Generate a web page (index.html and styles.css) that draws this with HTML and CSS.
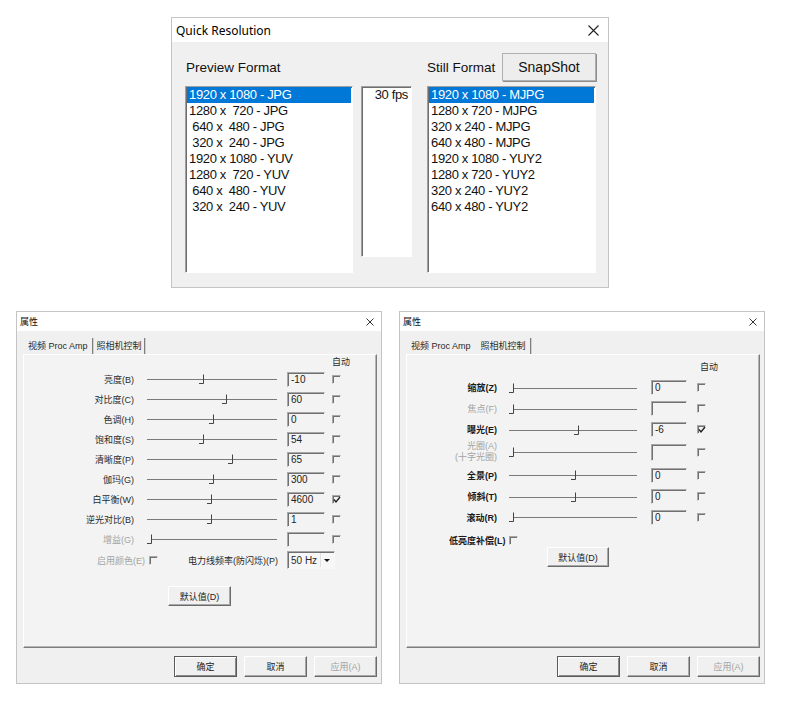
FILE: index.html
```html
<!DOCTYPE html>
<html>
<head>
<meta charset="utf-8">
<title>Camera dialogs</title>
<link rel="stylesheet" href="styles.css">
</head>
<body>

<div class="win qr">
  <div class="titlebar">
    <span class="ttl">Quick Resolution</span>
    <svg class="close-l" width="11" height="11" viewBox="0 0 11 11"><path d="M0.5 0.5L10.5 10.5M10.5 0.5L0.5 10.5" stroke="#222" stroke-width="1.1" fill="none"/></svg>
  </div>
  <div class="qr-body">
    <div class="qr-head">
      <div class="prev-label">Preview Format</div>
      <div class="still">
        <span>Still Format</span>
        <div class="snap">SnapShot</div>
      </div>
    </div>
    <div class="qr-lists">
      <div class="sunken lst lst-prev">
        <div class="item sel">1920 x 1080 - JPG</div>
        <div class="item">1280 x  720 - JPG</div>
        <div class="item"> 640 x  480 - JPG</div>
        <div class="item"> 320 x  240 - JPG</div>
        <div class="item">1920 x 1080 - YUV</div>
        <div class="item">1280 x  720 - YUV</div>
        <div class="item"> 640 x  480 - YUV</div>
        <div class="item"> 320 x  240 - YUV</div>
      </div>
      <div class="sunken lst lst-fps">
        <div class="item fps">30 fps</div>
      </div>
      <div class="sunken lst lst-still">
        <div class="item sel">1920 x 1080 - MJPG</div>
        <div class="item">1280 x 720 - MJPG</div>
        <div class="item">320 x 240 - MJPG</div>
        <div class="item">640 x 480 - MJPG</div>
        <div class="item">1920 x 1080 - YUY2</div>
        <div class="item">1280 x 720 - YUY2</div>
        <div class="item">320 x 240 - YUY2</div>
        <div class="item">640 x 480 - YUY2</div>
      </div>
    </div>
  </div>
</div>

<!-- Left property dialog -->
<div class="win prop prop-l">
  <div class="titlebar">
    <span class="ttl">属性</span>
    <svg class="close-s" width="8" height="8" viewBox="0 0 8 8"><path d="M0.5 0.5L7.5 7.5M7.5 0.5L0.5 7.5" stroke="#333" stroke-width="1" fill="none"/></svg>
  </div>
  <div class="prop-body">
    <div class="tabs">
      <span class="tab t1 sep">视频 Proc Amp</span>
      <span class="tab t2 sep">照相机控制</span>
    </div>
    <div class="panel">
      <div class="auto-h">自动</div>
      <div class="row">
        <span class="lbl">亮度(B)</span>
        <svg class="slider" width="130" height="14"><path d="M0 7.5H130" stroke="#7a7a7a"/><path d="M52 11.5H56.5V2.5" stroke="#444" fill="none"/></svg>
        <span class="tb sunk">-10</span><span class="cb sunk"></span>
      </div>
      <div class="row">
        <span class="lbl">对比度(C)</span>
        <svg class="slider" width="130" height="14"><path d="M0 7.5H130" stroke="#7a7a7a"/><path d="M75 11.5H79.5V2.5" stroke="#444" fill="none"/></svg>
        <span class="tb sunk">60</span><span class="cb sunk"></span>
      </div>
      <div class="row">
        <span class="lbl">色调(H)</span>
        <svg class="slider" width="130" height="14"><path d="M0 7.5H130" stroke="#7a7a7a"/><path d="M62 11.5H66.5V2.5" stroke="#444" fill="none"/></svg>
        <span class="tb sunk">0</span><span class="cb sunk"></span>
      </div>
      <div class="row">
        <span class="lbl">饱和度(S)</span>
        <svg class="slider" width="130" height="14"><path d="M0 7.5H130" stroke="#7a7a7a"/><path d="M52 11.5H56.5V2.5" stroke="#444" fill="none"/></svg>
        <span class="tb sunk">54</span><span class="cb sunk"></span>
      </div>
      <div class="row">
        <span class="lbl">清晰度(P)</span>
        <svg class="slider" width="130" height="14"><path d="M0 7.5H130" stroke="#7a7a7a"/><path d="M81 11.5H85.5V2.5" stroke="#444" fill="none"/></svg>
        <span class="tb sunk">65</span><span class="cb sunk"></span>
      </div>
      <div class="row">
        <span class="lbl">伽玛(G)</span>
        <svg class="slider" width="130" height="14"><path d="M0 7.5H130" stroke="#7a7a7a"/><path d="M62 11.5H66.5V2.5" stroke="#444" fill="none"/></svg>
        <span class="tb sunk">300</span><span class="cb sunk"></span>
      </div>
      <div class="row">
        <span class="lbl">白平衡(W)</span>
        <svg class="slider" width="130" height="14"><path d="M0 7.5H130" stroke="#7a7a7a"/><path d="M60 11.5H64.5V2.5" stroke="#444" fill="none"/></svg>
        <span class="tb sunk">4600</span><span class="cb sunk"><svg width="8" height="8" viewBox="0 0 8 8"><path d="M1 3.5L3 6L7 1" stroke="#222" stroke-width="1.4" fill="none"/></svg></span>
      </div>
      <div class="row">
        <span class="lbl">逆光对比(B)</span>
        <svg class="slider" width="130" height="14"><path d="M0 7.5H130" stroke="#7a7a7a"/><path d="M60 11.5H64.5V2.5" stroke="#444" fill="none"/></svg>
        <span class="tb sunk">1</span><span class="cb sunk"></span>
      </div>
      <div class="row">
        <span class="lbl dis">增益(G)</span>
        <svg class="slider" width="130" height="14"><path d="M4 7.5H130" stroke="#7a7a7a"/><path d="M0 11.5H4.5V2.5" stroke="#444" fill="none"/></svg>
        <span class="tb sunk"></span><span class="cb sunk"></span>
      </div>
      <div class="row2">
        <div class="grp1"><span class="dis">启用颜色(E)</span><span class="cb sunk"></span></div>
        <span class="pl-lbl">电力线频率(防闪烁)(P)</span>
        <div class="combo sunk"><span class="cval">50 Hz</span><span class="cbtn"><i class="tri"></i></span></div>
      </div>
      <div class="pbtn defbtn">默认值(D)</div>
    </div>
    <div class="btnrow">
      <div class="pbtn def">确定</div>
      <div class="pbtn">取消</div>
      <div class="pbtn dis">应用(A)</div>
    </div>
  </div>
</div>

<!-- Right property dialog -->
<div class="win prop prop-r">
  <div class="titlebar">
    <span class="ttl">属性</span>
    <svg class="close-s" width="8" height="8" viewBox="0 0 8 8"><path d="M0.5 0.5L7.5 7.5M7.5 0.5L0.5 7.5" stroke="#333" stroke-width="1" fill="none"/></svg>
  </div>
  <div class="prop-body">
    <div class="tabs">
      <span class="tab t1">视频 Proc Amp</span>
      <span class="tab t2 sep">照相机控制</span>
    </div>
    <div class="panel">
      <div class="auto-h">自动</div>
      <div class="row r21">
        <span class="lbl">缩放(Z)</span>
        <svg class="slider" width="128" height="14"><path d="M4 7.5H128" stroke="#7a7a7a"/><path d="M0 11.5H4.5V2.5" stroke="#444" fill="none"/></svg>
        <span class="tb sunk">0</span><span class="cb sunk"></span>
      </div>
      <div class="row r21">
        <span class="lbl dis">焦点(F)</span>
        <svg class="slider" width="128" height="14"><path d="M4 7.5H128" stroke="#7a7a7a"/><path d="M0 11.5H4.5V2.5" stroke="#444" fill="none"/></svg>
        <span class="tb sunk"></span><span class="cb sunk"></span>
      </div>
      <div class="row r21">
        <span class="lbl">曝光(E)</span>
        <svg class="slider" width="128" height="14"><path d="M0 7.5H128" stroke="#7a7a7a"/><path d="M65 11.5H69.5V2.5" stroke="#444" fill="none"/></svg>
        <span class="tb sunk">-6</span><span class="cb sunk"><svg width="8" height="8" viewBox="0 0 8 8"><path d="M1 3.5L3 6L7 1" stroke="#222" stroke-width="1.4" fill="none"/></svg></span>
      </div>
      <div class="row r24">
        <span class="lbl dis two">光圈(A)<br>(十字光圈)</span>
        <svg class="slider" width="128" height="14"><path d="M4 7.5H128" stroke="#7a7a7a"/><path d="M0 11.5H4.5V2.5" stroke="#444" fill="none"/></svg>
        <span class="tb sunk tall"></span><span class="cb sunk"></span>
      </div>
      <div class="row r22">
        <span class="lbl">全景(P)</span>
        <svg class="slider" width="128" height="14"><path d="M0 7.5H128" stroke="#7a7a7a"/><path d="M62 11.5H66.5V2.5" stroke="#444" fill="none"/></svg>
        <span class="tb sunk">0</span><span class="cb sunk"></span>
      </div>
      <div class="row r21">
        <span class="lbl">倾斜(T)</span>
        <svg class="slider" width="128" height="14"><path d="M0 7.5H128" stroke="#7a7a7a"/><path d="M62 11.5H66.5V2.5" stroke="#444" fill="none"/></svg>
        <span class="tb sunk">0</span><span class="cb sunk"></span>
      </div>
      <div class="row">
        <span class="lbl">滚动(R)</span>
        <svg class="slider" width="128" height="14"><path d="M4 7.5H128" stroke="#7a7a7a"/><path d="M0 11.5H4.5V2.5" stroke="#444" fill="none"/></svg>
        <span class="tb sunk">0</span><span class="cb sunk"></span>
      </div>
      <div class="row3">
        <span class="lbl3">低亮度补偿(L)</span><span class="cb sunk"></span>
      </div>
      <div class="pbtn defbtn">默认值(D)</div>
    </div>
    <div class="btnrow">
      <div class="pbtn def">确定</div>
      <div class="pbtn">取消</div>
      <div class="pbtn dis">应用(A)</div>
    </div>
  </div>
</div>

</body>
</html>
```

FILE: styles.css
```css
* { box-sizing: border-box; }

html, body { margin: 0; }

body {
  width: 788px;
  height: 707px;
  position: relative;
  overflow: hidden;
  background: #ffffff;
  font-family: "Liberation Sans", Arial, sans-serif;
  color: #111;
}

/* generic window (free canvas placement) */
.win {
  position: absolute;
  display: flex;
  flex-direction: column;
  background: #f0f0f0;
  border: 1px solid #c4c4c4;
}

.titlebar {
  display: flex;
  align-items: center;
  justify-content: space-between;
  background: #ffffff;
  flex: none;
}

/* sunken 3D edge */
.sunken {
  border: 1px solid;
  border-color: #a0a0a0 #ffffff #ffffff #a0a0a0;
  box-shadow: inset 1px 1px 0 #6d6d6d;
}

.sunk {
  border: 1px solid;
  border-color: #a8a8a8 transparent transparent #a8a8a8;
  box-shadow: inset 1px 1px 0 #707070;
}

/* ---------- Quick Resolution ---------- */
.qr {
  left: 171px;
  top: 17px;
  width: 438px;
  height: 271px;
}

.qr .titlebar {
  height: 24px;
  padding: 0 9px 0 4px;
  font-family: "Noto Sans", "Liberation Sans", sans-serif;
  font-size: 12px;
  color: #000;
}

.qr-body {
  padding: 11px 0 0 13px;
}

.qr-head {
  display: flex;
  align-items: center;
  height: 28px;
  margin-bottom: 5px;
  font-size: 13.5px;
  color: #111;
}

.prev-label {
  width: 242px;
  padding-left: 1px;
}

.still {
  width: 169px;
  display: flex;
  align-items: center;
  justify-content: space-between;
}

.snap {
  width: 94px;
  height: 28px;
  display: flex;
  align-items: center;
  justify-content: center;
  font-size: 14px;
  background: #ededed;
  border: 1px solid #b0b0b0;
  box-shadow: 1px 1px 0 #8c8c8c;
}

.qr-lists {
  display: flex;
  align-items: flex-start;
}

.lst {
  background: #ffffff;
  padding: 0 1px;
  font-size: 13px;
  letter-spacing: -0.35px;
  color: #111;
}

.lst-prev { width: 168px; height: 187px; }
.lst-fps { width: 51px; height: 171px; margin-left: 8px; }
.lst-still { width: 169px; height: 187px; margin-left: 15px; }

.item {
  height: 16px;
  line-height: 16px;
  padding-left: 2px;
  white-space: pre;
}

.item.sel {
  background: #0078d7;
  color: #ffffff;
}

.item.fps {
  text-align: right;
  padding-right: 2px;
}

/* ---------- Property dialogs ---------- */
.prop {
  top: 311px;
  width: 366px;
  height: 373px;
  font-family: "Liberation Sans", "Noto Sans CJK SC", sans-serif;
  font-size: 9px;
  color: #2a2a2a;
}

.prop-l { left: 16px; }
.prop-r { left: 399px; }

.prop .titlebar {
  height: 19px;
  padding: 0 7px 0 3px;
  font-size: 9px;
  color: #111;
}

.prop-body {
  flex: 1;
  display: flex;
  flex-direction: column;
  padding: 0 4px 0 6px;
}

.tabs {
  display: flex;
  height: 16px;
  margin-top: 7px;
}

.tab {
  line-height: 17px;
  white-space: nowrap;
  border-right: 1px solid transparent;
}

.tab.sep {
  border-right: 1px solid #7d7d7d;
  box-shadow: 1px 0 0 #d0d0d0;
  height: 18px;
}

.tab.t1 { padding: 0 4px 0 5px; }
.tab.t2 { padding: 0 2px 0 4px; }
.prop-r .tab.t2 { padding: 0 4px 0 5px; }

.panel {
  height: 294px;
  display: flex;
  flex-direction: column;
  background: #f3f3f3;
  border: 1px solid;
  border-color: #ffffff #7d7d7d #7d7d7d #ffffff;
  box-shadow: inset -1px -1px 0 #b5b5b5;
}

.auto-h {
  height: 14px;
  line-height: 14px;
  padding-left: 308px;
}

.prop-r .auto-h {
  margin-top: 5px;
  margin-bottom: 3px;
  padding-left: 293px;
}

.row {
  display: flex;
  align-items: center;
  height: 20px;
}

.r21 { height: 21px; }
.r22 { height: 22px; }
.r24 { height: 24px; }

.lbl {
  width: 110px;
  text-align: right;
  white-space: nowrap;
}

.prop-r .lbl {
  width: 90px;
  font-weight: 700;
  color: #1a1a1a;
}

.lbl.two {
  line-height: 11px;
}

.prop .lbl.dis, .prop .dis {
  color: #a3a3a3;
  font-weight: 400;
}

.slider {
  display: block;
  margin-left: 13px;
  flex: none;
}

.prop-r .slider { margin-left: 12px; }

.tb {
  display: block;
  margin-left: 10px;
  width: 38px;
  height: 15px;
  padding: 1px 0 0 3px;
  font-size: 10px;
  line-height: 12px;
  color: #222;
  flex: none;
}

.prop-r .tb {
  margin-left: 14px;
  width: 36px;
}

.tb.tall { height: 17px; }

.cb {
  display: block;
  flex: none;
  width: 9px;
  height: 9px;
  margin-left: 7px;
  position: relative;
}

.prop-r .row .cb { margin-left: 10px; }

.cb svg {
  position: absolute;
  left: 0;
  top: 0;
}

.row2 {
  display: flex;
  align-items: center;
  height: 22px;
}

.grp1 {
  width: 134px;
  display: flex;
  align-items: center;
  justify-content: flex-end;
}

.grp1 .cb { margin-left: 4px; }

.pl-lbl {
  width: 120px;
  text-align: right;
  white-space: nowrap;
}

.combo {
  display: flex;
  align-items: center;
  margin-left: 9px;
  width: 48px;
  height: 18px;
  font-size: 10px;
  background: #f7f7f7;
}

.cval {
  flex: 1;
  padding-left: 3px;
}

.cbtn {
  width: 12px;
  height: 14px;
  margin-right: 2px;
  display: flex;
  align-items: center;
  justify-content: center;
  background: #f7f7f7;
  border-left: 1px solid #e0e0e0;
}

.tri {
  width: 0;
  height: 0;
  border-left: 3px solid transparent;
  border-right: 3px solid transparent;
  border-top: 3px solid #111;
}

.row3 {
  display: flex;
  align-items: center;
  height: 13px;
  margin-top: 7px;
  padding-left: 42px;
}

.row3 .cb { margin-left: 3px; }

.lbl3 {
  font-weight: 700;
  color: #1a1a1a;
  white-space: nowrap;
}

/* buttons */
.pbtn {
  display: flex;
  align-items: center;
  justify-content: center;
  width: 63px;
  height: 21px;
  background: #f0f0f0;
  border: 1px solid;
  border-color: #ffffff #6a6a6a #6a6a6a #ffffff;
  box-shadow: inset -1px -1px 0 #a8a8a8;
  white-space: nowrap;
  color: #222;
}

.pbtn.def {
  border-color: #5a5a5a;
  box-shadow: inset 1px 1px 0 #ffffff, inset -1px -1px 0 #8a8a8a;
}

.pbtn.dis { color: #a3a3a3; }

.defbtn {
  margin-top: 15px;
  margin-left: 144px;
  height: 20px;
}

.prop-r .defbtn {
  margin-top: 0;
  margin-left: 140px;
  width: 62px;
  height: 20px;
}

.btnrow {
  display: flex;
  justify-content: flex-end;
  gap: 7px;
  margin-top: 8px;
}
```
